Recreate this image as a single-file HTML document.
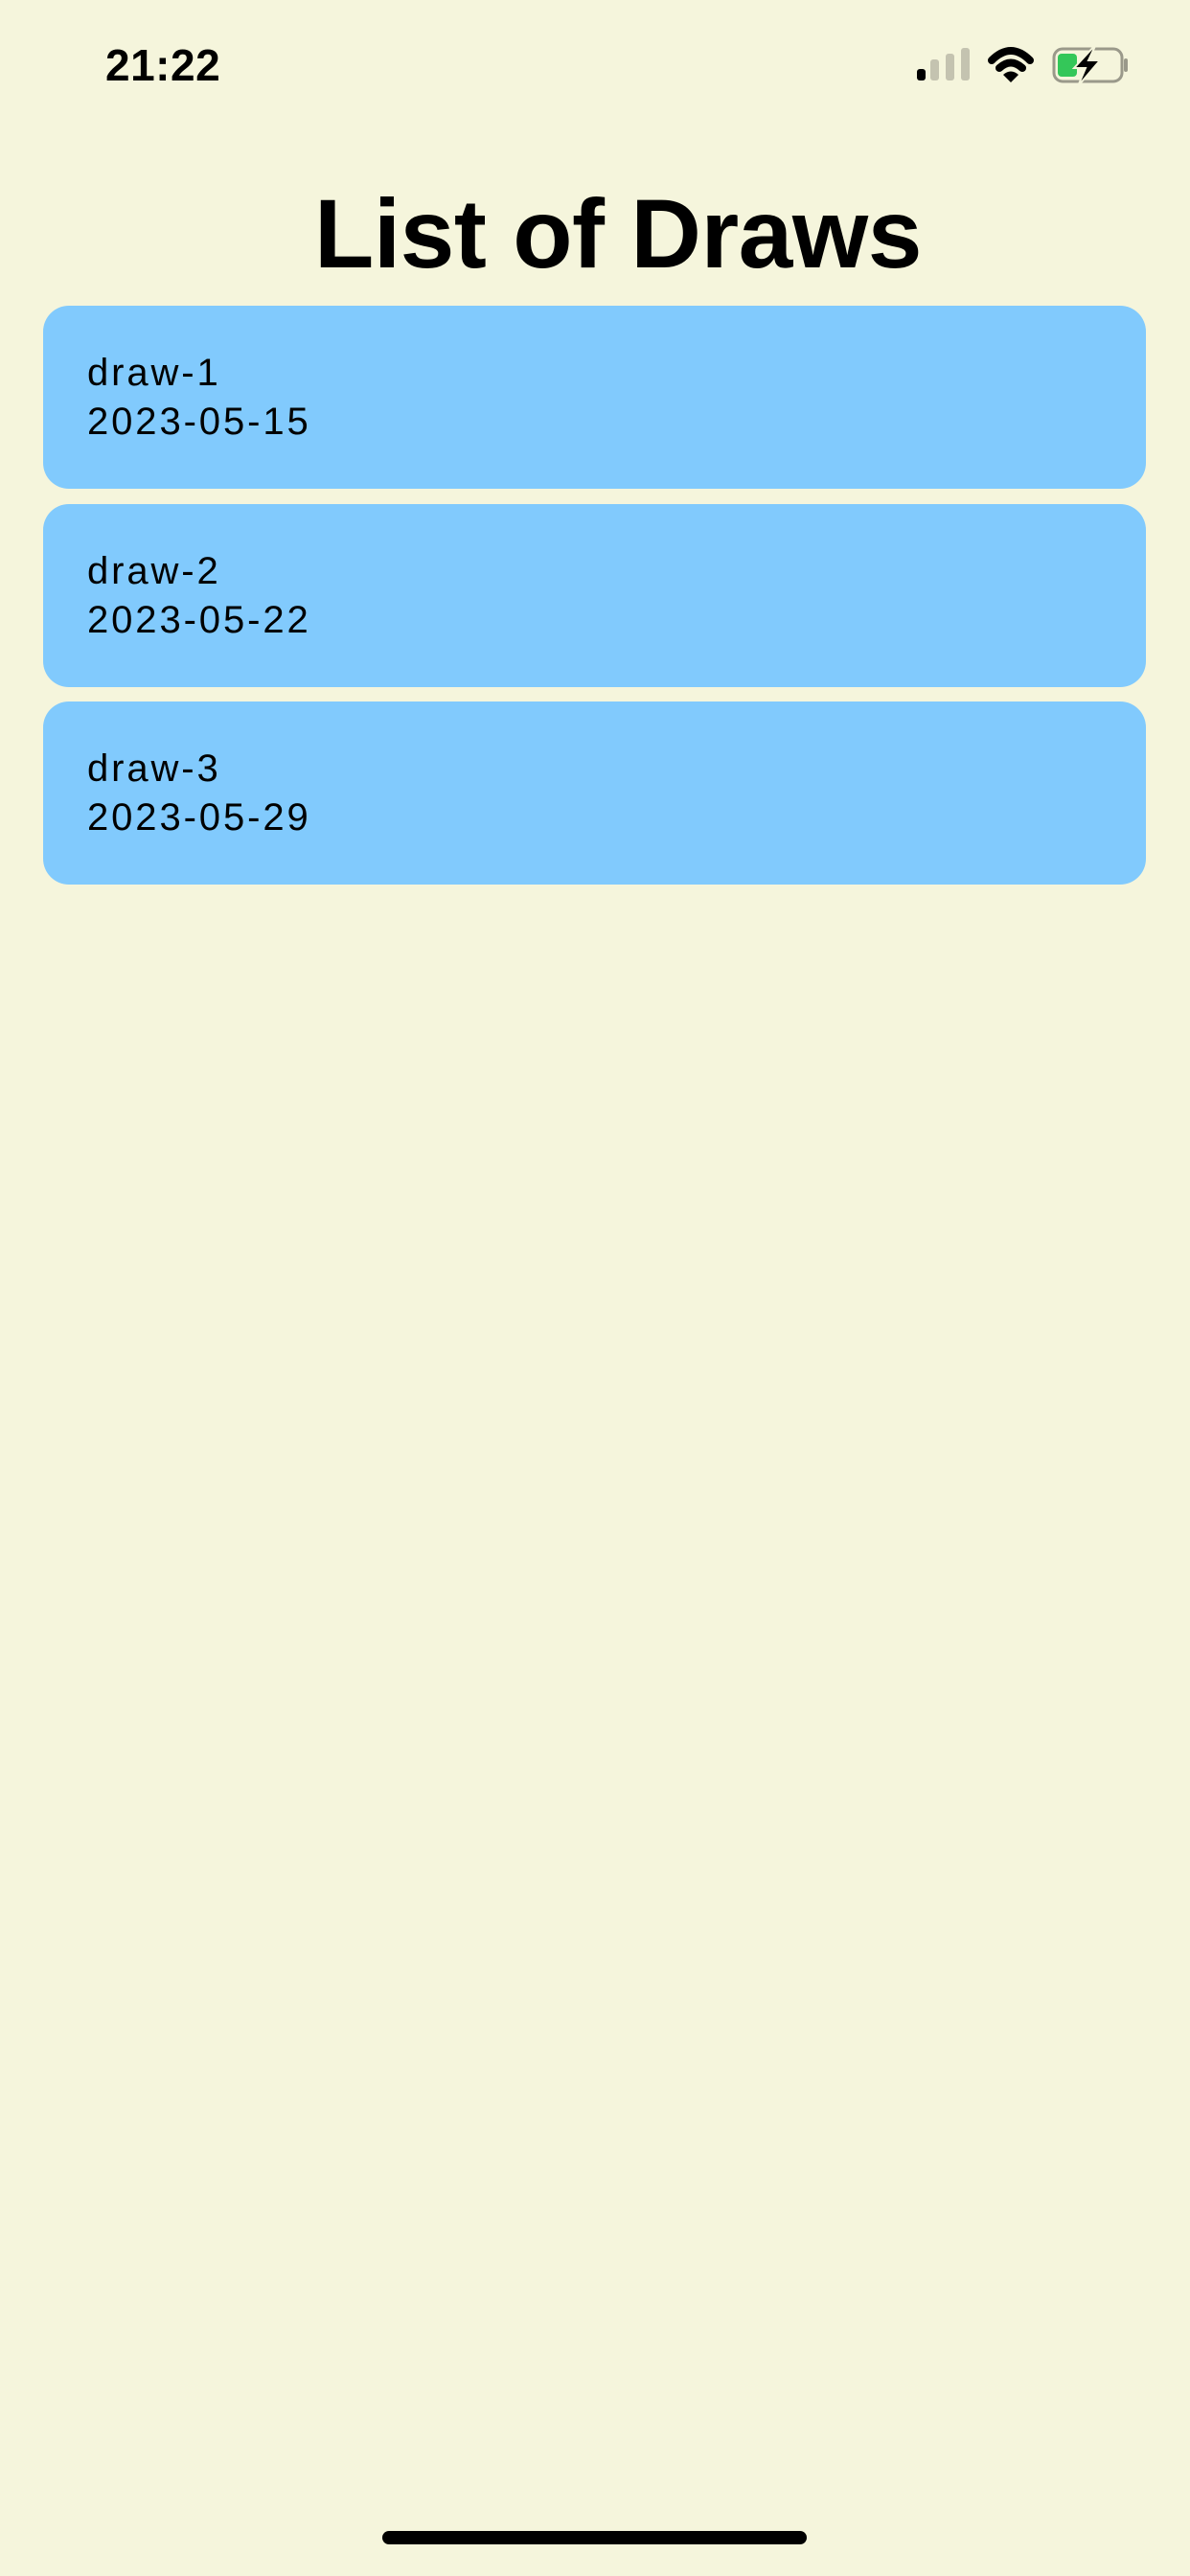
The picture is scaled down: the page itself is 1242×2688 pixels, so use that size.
<!DOCTYPE html>
<html><head><meta charset="utf-8"><style>
html,body{margin:0;padding:0}
body{width:1242px;height:2688px;background:#f5f5dc;position:relative;overflow:hidden;font-family:"Liberation Sans",sans-serif;color:#000}
.time{position:absolute;left:110px;top:40px;font-size:46px;font-weight:bold;line-height:56px;letter-spacing:0.5px}
h1{position:absolute;left:24px;width:1242px;top:184px;margin:0;text-align:center;font-size:102px;font-weight:bold;line-height:120px;letter-spacing:-0.5px}
.card{position:absolute;left:45px;width:1151px;height:191px;background:#81cafd;border-radius:27px}
.card div{position:absolute;left:46px;font-size:40px;line-height:48px;letter-spacing:2.9px}
.a{top:46px}.b{top:97px}
.home{position:absolute;left:399px;top:2641px;width:443px;height:14px;border-radius:7px;background:#000}
</style></head><body>
<div class="time">21:22</div>
<svg style="position:absolute;left:0;top:0" width="1242" height="100">
<rect x="957" y="72" width="9" height="12" rx="3" fill="#000"/>
<rect x="971" y="62" width="9" height="22" rx="3" fill="#c4c3b0"/>
<rect x="987" y="56" width="9" height="28" rx="3" fill="#c4c3b0"/>
<rect x="1003" y="50" width="9" height="34" rx="3" fill="#c4c3b0"/>
<path d="M1035 63 Q1055 43 1075 63" stroke="#000" stroke-width="8" fill="none" stroke-linecap="round"/>
<path d="M1043 71 Q1055 60 1067 71" stroke="#000" stroke-width="8" fill="none" stroke-linecap="round"/>
<path d="M1047 78 L1055 86 L1063 78 Q1055 71 1047 78Z" fill="#000"/>
<rect x="1100" y="51" width="71" height="34" rx="9" fill="none" stroke="#9a998a" stroke-width="3"/>
<rect x="1173" y="61" width="4" height="14" rx="2" fill="#9a998a"/>
<rect x="1104" y="56" width="20" height="24" rx="4" fill="#34c759"/>
<path d="M1144 46 L1121 71 L1133 71 L1125 90 L1148 63 L1136 63 Z" fill="#000" stroke="#f5f5dc" stroke-width="2"/>
</svg>
<h1>List of Draws</h1>
<div class="card" style="top:319px"><div class="a">draw-1</div><div class="b">2023-05-15</div></div>
<div class="card" style="top:526px"><div class="a">draw-2</div><div class="b">2023-05-22</div></div>
<div class="card" style="top:732px"><div class="a">draw-3</div><div class="b">2023-05-29</div></div>
<div class="home"></div>
</body></html>
